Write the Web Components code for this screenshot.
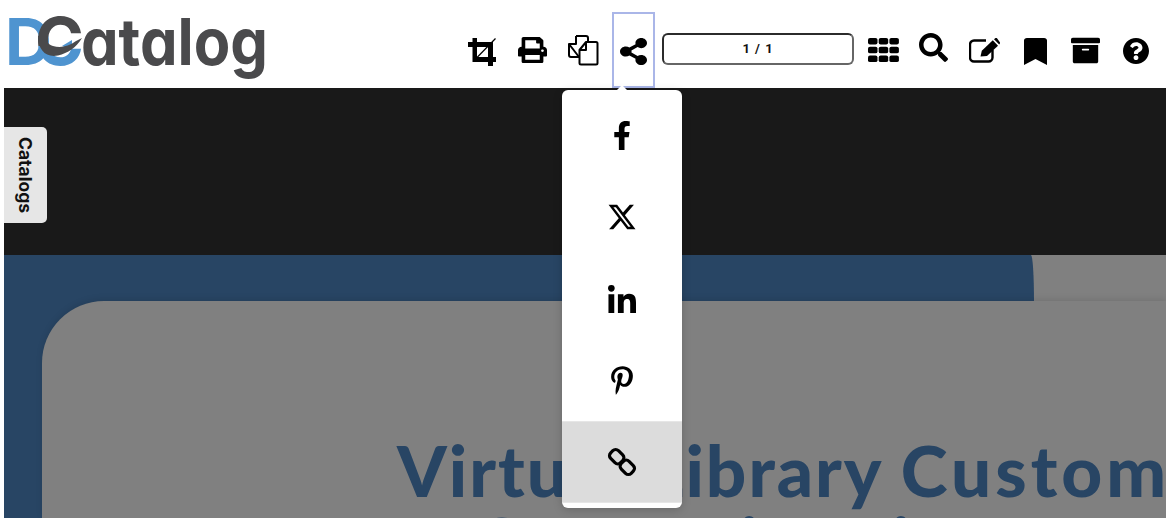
<!DOCTYPE html>
<html><head><meta charset="utf-8">
<style>
html,body{margin:0;padding:0;height:518px;overflow:hidden;background:#fff;font-family:"Liberation Sans",Arial,sans-serif}
</style></head>
<body>
<template id="t-logo">
<style>
:host{display:block;width:290px;height:88px;flex:none}
svg{display:block}
text{font-family:Inter,"Liberation Sans",sans-serif;font-weight:700;font-feature-settings:"cv11" 1}
</style>
<svg width="290" height="88" viewBox="0 0 290 88" role="img" aria-label="DCatalog">
<clipPath id="cc"><rect x="30" y="10" width="60" height="36"/></clipPath>
<clipPath id="cb"><rect x="30" y="46" width="60" height="24"/></clipPath>
<text x="5" y="64.500" font-size="65" fill="#4f94d0">D</text>
<text x="35" y="64.500" font-size="66" fill="#4f94d0" clip-path="url(#cb)">C</text>
<path d="M62 46 L72 40 L72 50z" fill="#4f94d0"/>
<text x="35" y="64.500" font-size="66" fill="#4a4a4c" clip-path="url(#cc)">C</text>
<path d="M38 36C38 50 46 58 58 55.500C68 53 76 48 82 38L76 41C68 47 60 48 53 46C47 44 46 40 46 36Z" fill="#4a4a4c"/>
<text x="81" y="64.500" font-size="65" fill="#4a4a4c" textLength="187" lengthAdjust="spacingAndGlyphs">atalog</text>
</svg>
</template>

<template id="t-tool">
<style>
:host{display:flex;align-items:center;justify-content:center;flex:none;box-sizing:border-box;height:76px;color:#000}
:host([active]){border:2px solid #aab6e8}
::slotted(svg){display:block;fill:currentColor}
</style><slot></slot>
</template>

<template id="t-pager">
<style>
:host{display:flex;align-items:center;justify-content:center;flex:none;box-sizing:border-box;width:192px;height:32px;border:2px solid #2b2b2b;border-bottom-color:#666;border-right-color:#666;border-radius:6px;font:700 13px "Roboto","Liberation Sans",sans-serif;color:#111;letter-spacing:1px;background:#fff}
</style><slot></slot>
</template>

<template id="t-toolbar">
<style>
:host{display:flex;height:88px;align-items:flex-start;background:#fff;position:relative}
.tools{display:flex;align-items:center;margin-left:auto;height:76px;margin-top:12px;padding-right:17px}
</style>
<slot name="logo"></slot><div class="tools"><slot></slot></div>
</template>

<template id="t-menu">
<style>
:host{display:block;position:absolute;left:562px;top:90px;width:120px;height:418px;box-sizing:border-box;background:#fff;border-radius:6px;padding:5px 0 7px;box-shadow:0 2px 10px rgba(0,0,0,.18);z-index:5}
:host::before{content:"";position:absolute;left:54px;top:-5px;border:6px solid transparent;border-top:0;border-bottom:6px solid #fff}
</style><slot></slot>
</template>

<template id="t-item">
<style>
:host{display:flex;align-items:center;justify-content:center;height:81.5px;color:#000}
:host([hot]){background:#dcdcdc;box-shadow:inset 0 1px 0 #e6e6e6,inset 0 -1px 0 #e6e6e6}
::slotted(svg){display:block;fill:currentColor}
</style><slot></slot>
</template>

<template id="t-tab">
<style>
:host{display:flex;align-items:center;justify-content:center;box-sizing:border-box;width:43px;height:96px;background:#e6e6e6;border-radius:0 5px 5px 0;font:700 17.5px "Inter","Liberation Sans",sans-serif;color:#111}
span{writing-mode:vertical-rl}
</style><span><slot></slot></span>
</template>

<template id="t-page">
<style>
:host{display:block;background:#808080;height:263px;overflow:hidden}
.blue{width:1030px;height:100%;box-sizing:border-box;background:#284564;border-top-right-radius:3px 46px;padding:46px 0 0 38px}
.card{width:1124px;height:217px;box-sizing:border-box;background:#808080;border-radius:62px 0 0 0;box-shadow:0 -2px 6px rgba(0,0,0,.1);padding-top:133px;font:900 71px/72px "Lato","Liberation Sans",sans-serif;letter-spacing:2px;color:#284564;white-space:nowrap}
.l{display:block}
.a{padding-left:355px}
.b{padding-left:432px}
.w{letter-spacing:4px}
</style>
<div class="blue"><div class="card"><span class="l a">Virtual Library <span class="w">Custom</span></span><span class="l b">Categories List</span></div></div>
</template>

<template id="t-stage">
<style>
:host{display:block;position:relative;height:430px;margin-left:4px;background:#191919;box-sizing:border-box;padding-top:167px}
.tab{position:absolute;left:0;top:39px}
</style>
<div class="tab"><slot name="tab"></slot></div>
<slot></slot>
</template>

<template id="t-app">
<style>:host{display:block;position:relative;width:1166px;height:518px;overflow:hidden;font-family:"Liberation Sans",sans-serif}</style>
<slot></slot>
</template>

<dc-app>
<dc-toolbar>
<dc-logo slot="logo"></dc-logo>
<dc-tool style="margin-right:22px;margin-top:4px"><svg width="28" height="28" viewBox="0 0 28 28"><path fill-rule="evenodd" d="M4.500 0H9V4H25V19H28V24H25V28H20V24H4.500V9H0V4H4.500ZM9 9V19H20V9Z"/><path d="M9 19.500L27.500 .5" stroke="#000" stroke-width="1.200" fill="none"/></svg></dc-tool>
<dc-tool style="margin-right:20px"><svg width="29" height="26" viewBox="0 0 512 512" preserveAspectRatio="none"><path d="M448 192V77.25c0-8.49-3.37-16.62-9.37-22.63L393.37 9.37c-6-6-14.14-9.37-22.63-9.37H96C78.33 0 64 14.33 64 32v160c-35.35 0-64 28.65-64 64v112c0 8.84 7.16 16 16 16h48v96c0 17.67 14.33 32 32 32h320c17.67 0 32-14.33 32-32v-96h48c8.84 0 16-7.16 16-16V256c0-35.35-28.65-64-64-64zm-64 256H128v-96h256v96zm0-224H128V64h192v48c0 8.84 7.16 16 16 16h48v96zm48 72c-13.25 0-24-10.75-24-24 0-13.26 10.75-24 24-24s24 10.74 24 24c0 13.25-10.75 24-24 24z"/></svg></dc-tool>
<dc-tool style="margin-right:13px"><svg width="32" height="32" viewBox="0 0 32 32"><g fill="none" stroke="#000" stroke-width="2" stroke-linejoin="round"><path d="M9 2H19a2 2 0 0 1 2 2V8M12 23H4a2 2 0 0 1-2-2V10z"/><path d="M2 10H9V2"/><path fill="#fff" d="M19 8H29a1.500 1.500 0 0 1 1.500 1.500V29A1.500 1.500 0 0 1 29 30.500H14A1.500 1.500 0 0 1 12.500 29V16z"/><path d="M12.500 16H19V8"/></g></svg></dc-tool>
<dc-tool active style="width:43px;margin-right:7px"><svg style="margin-top:2px" width="27" height="27" viewBox="0 0 448 512" preserveAspectRatio="none"><path d="M352 320c-22.608 0-43.387 7.819-59.79 20.895l-102.486-64.054a96.551 96.551 0 0 0 0-41.683l102.486-64.054C308.613 184.181 329.392 192 352 192c53.019 0 96-42.981 96-96S405.019 0 352 0s-96 42.981-96 96c0 7.158.79 14.13 2.276 20.841L155.790 180.895C139.387 167.819 118.608 160 96 160c-53.019 0-96 42.981-96 96s42.981 96 96 96c22.608 0 43.387-7.819 59.79-20.895l102.486 64.054A96.301 96.301 0 0 0 256 416c0 53.019 42.981 96 96 96s96-42.981 96-96-42.981-96-96-96z"/></svg></dc-tool>
<dc-pager style="margin-right:14px;margin-top:-3px">1 / 1</dc-pager>
<dc-tool style="margin-right:20px"><svg width="31" height="24" viewBox="0 0 31 26" preserveAspectRatio="none"><rect x="0" y="0" width="9.500" height="7" rx="2"/><rect x="10.700" y="0" width="9.500" height="7" rx="2"/><rect x="21.400" y="0" width="9.500" height="7" rx="2"/><rect x="0" y="9.500" width="9.500" height="7" rx="2"/><rect x="10.700" y="9.500" width="9.500" height="7" rx="2"/><rect x="21.400" y="9.500" width="9.500" height="7" rx="2"/><rect x="0" y="19" width="9.500" height="7" rx="2"/><rect x="10.700" y="19" width="9.500" height="7" rx="2"/><rect x="21.400" y="19" width="9.500" height="7" rx="2"/></svg></dc-tool>
<dc-tool style="margin-right:21px;margin-top:-5px"><svg width="29" height="29" viewBox="0 0 512 512"><path d="M505 442.700L405.300 343c-4.500-4.500-10.600-7-17-7H372c27.600-35.300 44-79.700 44-128C416 93.100 322.900 0 208 0S0 93.100 0 208s93.100 208 208 208c48.300 0 92.700-16.400 128-44v16.300c0 6.400 2.500 12.500 7 17l99.700 99.700c9.400 9.400 24.600 9.400 33.900 0l28.300-28.300c9.400-9.400 9.400-24.600.1-34zM208 336c-70.700 0-128-57.200-128-128 0-70.700 57.200-128 128-128 70.700 0 128 57.200 128 128 0 70.700-57.200 128-128 128z"/></svg></dc-tool>
<dc-tool style="margin-right:23px"><svg width="32" height="25" viewBox="0 0 32 25"><path d="M17 2.500H5a4 4 0 0 0-4 4V19.500a4 4 0 0 0 4 4H19.500a4 4 0 0 0 4-4V12" fill="none" stroke="#000" stroke-width="2.400"/><path d="M11.500 18.500L12.800 12.800L23.800 2.300L29 7.800L18 18Z"/><path d="M25 1.200L26.200 .2A1.500 1.500 0 0 1 28.200 .4L30.500 3.800A1.600 1.600 0 0 1 30.500 6L30.200 6.500Z"/></svg></dc-tool>
<dc-tool style="margin-right:24px;margin-top:2px"><svg width="23" height="27" viewBox="0 0 384 512" preserveAspectRatio="none"><path d="M0 512V48C0 21.490 21.490 0 48 0h288c26.510 0 48 21.490 48 48v464L192 400 0 512z"/></svg></dc-tool>
<dc-tool style="margin-right:23px"><svg width="29" height="29" viewBox="0 0 512 512"><path d="M32 448c0 17.700 14.300 32 32 32h384c17.700 0 32-14.300 32-32V160H32v288zm160-212c0-6.600 5.400-12 12-12h104c6.600 0 12 5.400 12 12v8c0 6.600-5.400 12-12 12H204c-6.600 0-12-5.400-12-12v-8zM480 32H32C14.300 32 0 46.300 0 64v48c0 8.800 7.200 16 16 16h480c8.800 0 16-7.200 16-16V64c0-17.700-14.300-32-32-32z"/></svg></dc-tool>
<dc-tool style="margin-top:1px"><svg width="26" height="26" viewBox="8 8 496 496"><path d="M504 256c0 136.997-111.043 248-248 248S8 392.997 8 256C8 119.083 119.043 8 256 8s248 111.083 248 248zM262.655 90c-54.497 0-89.255 22.957-116.549 63.758-3.536 5.286-2.353 12.415 2.715 16.258l34.699 26.310c5.205 3.947 12.621 3.008 16.665-2.122 17.864-22.658 30.113-35.797 57.303-35.797 20.429 0 45.698 13.148 45.698 32.958 0 14.976-12.363 22.667-32.534 33.976C247.128 238.528 216 254.941 216 296v4c0 6.627 5.373 12 12 12h56c6.627 0 12-5.373 12-12v-1.333c0-28.462 83.186-29.647 83.186-106.667 0-58.002-60.165-102-116.531-102zM256 338c-25.365 0-46 20.635-46 46 0 25.364 20.635 46 46 46s46-20.636 46-46c0-25.365-20.635-46-46-46z"/></svg></dc-tool>
</dc-toolbar>
<dc-stage>
<dc-tab slot="tab">Catalogs</dc-tab>
<dc-page></dc-page>
</dc-stage>
<dc-menu>
<dc-item><svg width="18" height="29" viewBox="0 0 320 512"><path d="M279.140 288l14.220-92.660h-88.910v-60.130c0-25.350 12.420-50.060 52.240-50.060h40.420V6.260S260.430 0 225.360 0c-73.220 0-121.080 44.380-121.080 124.720v70.620H22.890V288h81.390v224h100.170V288z"/></svg></dc-item>
<dc-item><svg width="30" height="30" viewBox="0 0 512 512"><path d="M389.200 48h70.600L305.600 224.200 487 464H345L233.700 318.600 106.500 464H35.800L200.700 275.500 26.800 48H172.400L272.900 180.900 389.200 48zM364.400 421.800h39.100L151.100 88h-42L364.400 421.800z"/></svg></dc-item>
<dc-item><svg width="28" height="28" viewBox="0 0 448 448"><path d="M100.280 448H7.400V148.900h92.880zM53.790 108.100C24.090 108.100 0 83.500 0 53.800a53.790 53.790 0 0 1 107.580 0c0 29.700-24.100 54.300-53.790 54.300zM447.900 448h-92.680V302.400c0-34.700-.7-79.200-48.290-79.200-48.290 0-55.690 37.700-55.690 76.700V448h-92.780V148.900h89.080v40.800h1.300c12.400-23.500 42.690-48.300 87.880-48.300 94 0 111.280 61.900 111.280 142.300V448z"/></svg></dc-item>
<dc-item><svg width="22" height="29" viewBox="0 0 384 512"><path d="M204 6.500C101.400 6.500 0 74.900 0 185.600 0 256 39.600 296 63.600 296c9.900 0 15.600-27.600 15.600-35.400 0-9.300-23.700-29.100-23.700-67.800 0-80.400 61.200-137.400 140.400-137.400 68.100 0 118.500 38.700 118.500 109.800 0 53.100-21.300 152.700-90.300 152.700-24.900 0-46.200-18-46.200-43.800 0-37.800 26.400-74.400 26.400-113.400 0-66.200-93.900-54.200-93.900 25.800 0 16.800 2.100 35.400 9.600 50.700-13.800 59.400-42 147.900-42 209.100 0 18.900 2.700 37.500 4.500 56.400 3.400 3.800 1.700 3.400 6.900 1.500 50.400-69 48.600-82.500 71.400-172.800 12.300 23.400 44.100 36 69.300 36 106.200 0 153.900-103.500 153.900-196.800C384 71.300 298.200 6.500 204 6.500z"/></svg></dc-item>
<dc-item hot><svg width="30" height="30" viewBox="0 0 30 30"><g fill="none" stroke="#000" stroke-width="3.200"><rect x="2.700" y="4.200" width="14" height="11" rx="4" transform="rotate(45 9.700 9.700)"/><rect x="13.300" y="14.800" width="14" height="11" rx="4" transform="rotate(45 20.300 20.300)"/></g></svg></dc-item>
</dc-menu>
</dc-app>

<script>
const defs={ 'dc-logo':'t-logo','dc-tool':'t-tool','dc-pager':'t-pager','dc-toolbar':'t-toolbar','dc-menu':'t-menu','dc-item':'t-item','dc-tab':'t-tab','dc-page':'t-page','dc-stage':'t-stage','dc-app':'t-app'};
for(const [name,id] of Object.entries(defs)){
  customElements.define(name,class extends HTMLElement{
    constructor(){super();this.attachShadow({mode:'open'}).appendChild(document.getElementById(id).content.cloneNode(true));}
  });
}
</script>
</body></html>
